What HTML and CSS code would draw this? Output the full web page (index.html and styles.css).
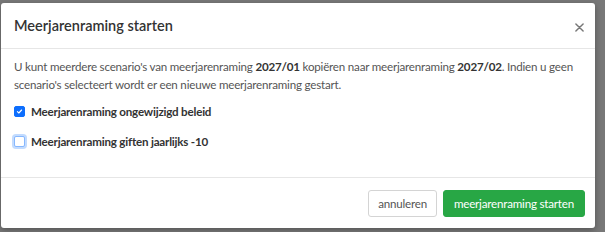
FILE: index.html
```html
<!DOCTYPE html>
<html lang="nl">
<head>
  <meta charset="UTF-8">
  <title>Meerjarenraming starten</title>
  <link rel="stylesheet" href="styles.css">
</head>
<body>

  <!-- dialoog -->
  <div class="modal">
    <div class="modal-header">
      <h5 class="modal-title">Meerjarenraming starten</h5>
      <button class="close" type="button" aria-label="Sluiten">
        <svg viewBox="0 0 10 10" class="close-icon">
          <path d="M1 1L9 9M9 1L1 9" stroke="currentColor" stroke-width="1.6" stroke-linecap="round"/>
        </svg>
      </button>
    </div>

    <div class="modal-body">
      <p class="intro">U kunt meerdere scenario's van meerjarenraming <b>2027/01</b> kopiëren naar meerjarenraming <b>2027/02</b>. Indien u geen scenario's selecteert wordt er een nieuwe meerjarenraming gestart.</p>

      <label class="check-row">
        <span class="check checked">
          <svg viewBox="0 0 12 12"><path d="M3.2 6.2L5.1 8L8.8 4" fill="none" stroke="#fff" stroke-width="1.5" stroke-linecap="round" stroke-linejoin="round"/></svg>
        </span>
        <span class="check-label">Meerjarenraming ongewijzigd beleid</span>
      </label>

      <label class="check-row">
        <span class="check focus"></span>
        <span class="check-label">Meerjarenraming giften jaarlijks -10</span>
      </label>
    </div>

    <div class="modal-footer">
      <button class="btn btn-light" type="button">annuleren</button>
      <button class="btn btn-green" type="button">meerjarenraming starten</button>
    </div>
  </div>

</body>
</html>
```

FILE: styles.css
```css
/* reset */
*, *::before, *::after { margin:0; padding:0; box-sizing:border-box; }
html, body { width:100%; height:100%; }

body {
  background:#787878;
  font-family:'Lato','Noto Sans',sans-serif;
  color:#555;
  overflow:hidden;
}

/* dialoog */
.modal {
  margin:3px 0 0 1px;
  width:594px; height:225px;
  background:#fff;
  border-radius:3px;
  display:flex; flex-direction:column;
  box-shadow:0 2px 6px rgba(0,0,0,0.3);
}

.modal-header {
  height:46px;
  display:flex; align-items:center; justify-content:space-between;
  padding:0 11px 0 13px;
  border-bottom:1px solid #e6e6e6;
}
.modal-title { font-size:14.5px; font-weight:600; color:#333; }
.close {
  background:transparent; border:none; cursor:pointer;
  color:#777; display:flex; margin-top:4px;
}
.close-icon { width:9px; height:9px; }

.modal-body {
  flex:1;
  padding:9px 12px 0 13px;
}
.intro {
  font-size:11.6px; line-height:17.5px; letter-spacing:-0.2px;
  color:#555;
}
.intro b { font-weight:700; color:#333; }

.check-row {
  display:flex; align-items:center; gap:6px;
  height:20px; margin-top:8px;
}
.check-row + .check-row { margin-top:10px; }
.check {
  width:11px; height:11px;
  border:1px solid #aaa; border-radius:2px;
  background:#fff; display:flex;
}
.check svg { width:100%; height:100%; }
.check.checked { background:#0d6efd; border-color:#0d6efd; }
.check.focus {
  border-color:#86b7fe;
  box-shadow:0 0 0 2px rgba(13,110,253,0.25);
}
.check-label { font-size:11.6px; font-weight:700; color:#333; letter-spacing:-0.2px; }

.modal-footer {
  height:51px;
  display:flex; align-items:center; justify-content:flex-end; gap:6px;
  padding:0 10px;
  border-top:1px solid #e6e6e6;
}
.btn {
  height:27px; padding:0 9px;
  font-family:inherit; font-size:11.6px; letter-spacing:-0.2px;
  border-radius:3px; cursor:pointer;
}
.btn-light { background:#fff; border:1px solid #d4d4d4; color:#555; }
.btn-green { background:#28a745; border:1px solid #28a745; color:#fff; padding:0 10px; }
```
